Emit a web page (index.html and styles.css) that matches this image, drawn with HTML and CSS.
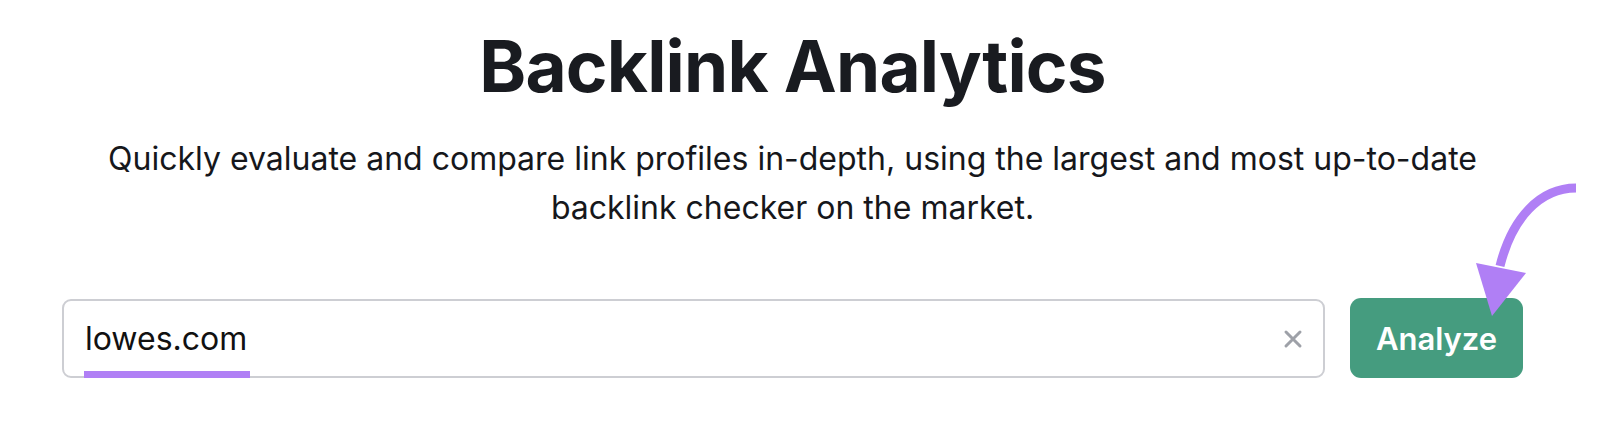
FILE: index.html
```html
<!DOCTYPE html>
<html lang="en">

<head>
    <meta charset="UTF-8">
    <meta name="viewport" content="width=device-width, initial-scale=1.0">
    <title>Backlink Analytics</title>
    <link rel="stylesheet" href="styles.css">
</head>

<body>
    <div class="hero">
        <h1>Backlink Analytics</h1>
        <p class="subtitle">Quickly evaluate and compare link profiles in-depth, using the largest and most up-to-date<br>backlink checker on the market.</p>

        <form class="search-row">
            <div class="search-box">
                <span class="domain">lowes.com</span>
                <button type="button" class="clear-btn" aria-label="Clear">
                    <svg width="20" height="20" viewBox="0 0 20 20">
                        <path d="M3 3 L17 17 M17 3 L3 17" stroke="#9ea1a8" stroke-width="3" stroke-linecap="round" fill="none" />
                    </svg>
                </button>
            </div>
            <button type="submit" class="analyze-btn">Analyze</button>
        </form>
    </div>

    <!-- annotation arrow pointing at the button -->
    <svg class="pointer-arrow" width="1600" height="422" viewBox="0 0 1600 422">
        <path d="M1576 188 C1540 188 1512 218 1500 266" stroke="#b07ff5" stroke-width="9" fill="none" />
        <polygon points="1476,263 1526,273 1492,316" fill="#b07ff5" />
    </svg>
</body>

</html>
```

FILE: styles.css
```css
/* General Styles */
body {
    margin: 0;
    font-family: Inter, "Noto Sans", sans-serif;
    background-color: #fff;
    color: #16171b;
}

.hero {
    width: 1461px;
    margin-left: 62px;
    text-align: center;
}

h1 {
    margin: 0;
    padding-top: 24px;
    font-size: 71px;
    font-weight: 700;
    line-height: 84px;
    letter-spacing: -0.8px;
    color: #191b20;
}

.subtitle {
    margin: 26px 0 0;
    font-size: 32px;
    line-height: 49px;
    color: #16171b;
}

/* Search row */
.search-row {
    display: flex;
    gap: 25px;
    margin-top: 67px;
    text-align: left;
}

.search-box {
    flex: 1;
    height: 79px;
    box-sizing: border-box;
    border: 2px solid #cdced3;
    border-radius: 9px;
    display: flex;
    align-items: center;
    justify-content: space-between;
    padding: 0 20px 0 21px;
}

.domain {
    position: relative;
    font-size: 32px;
    color: #111;
}

/* purple hand-drawn underline */
.domain::after {
    content: "";
    position: absolute;
    left: -1px;
    right: -3px;
    bottom: -20px;
    height: 7px;
    background-color: #b07ff5;
}

.clear-btn {
    background: none;
    border: none;
    padding: 0;
    width: 20px;
    height: 20px;
    cursor: pointer;
}

.analyze-btn {
    width: 173px;
    height: 80px;
    margin-top: -1px;
    background-color: #459c7f;
    color: #fff;
    border: none;
    border-radius: 11px;
    font-family: Inter, "Noto Sans", sans-serif;
    font-size: 31px;
    font-weight: 600;
    cursor: pointer;
}

.pointer-arrow {
    position: absolute;
    top: 0;
    left: 0;
    pointer-events: none;
}
```
